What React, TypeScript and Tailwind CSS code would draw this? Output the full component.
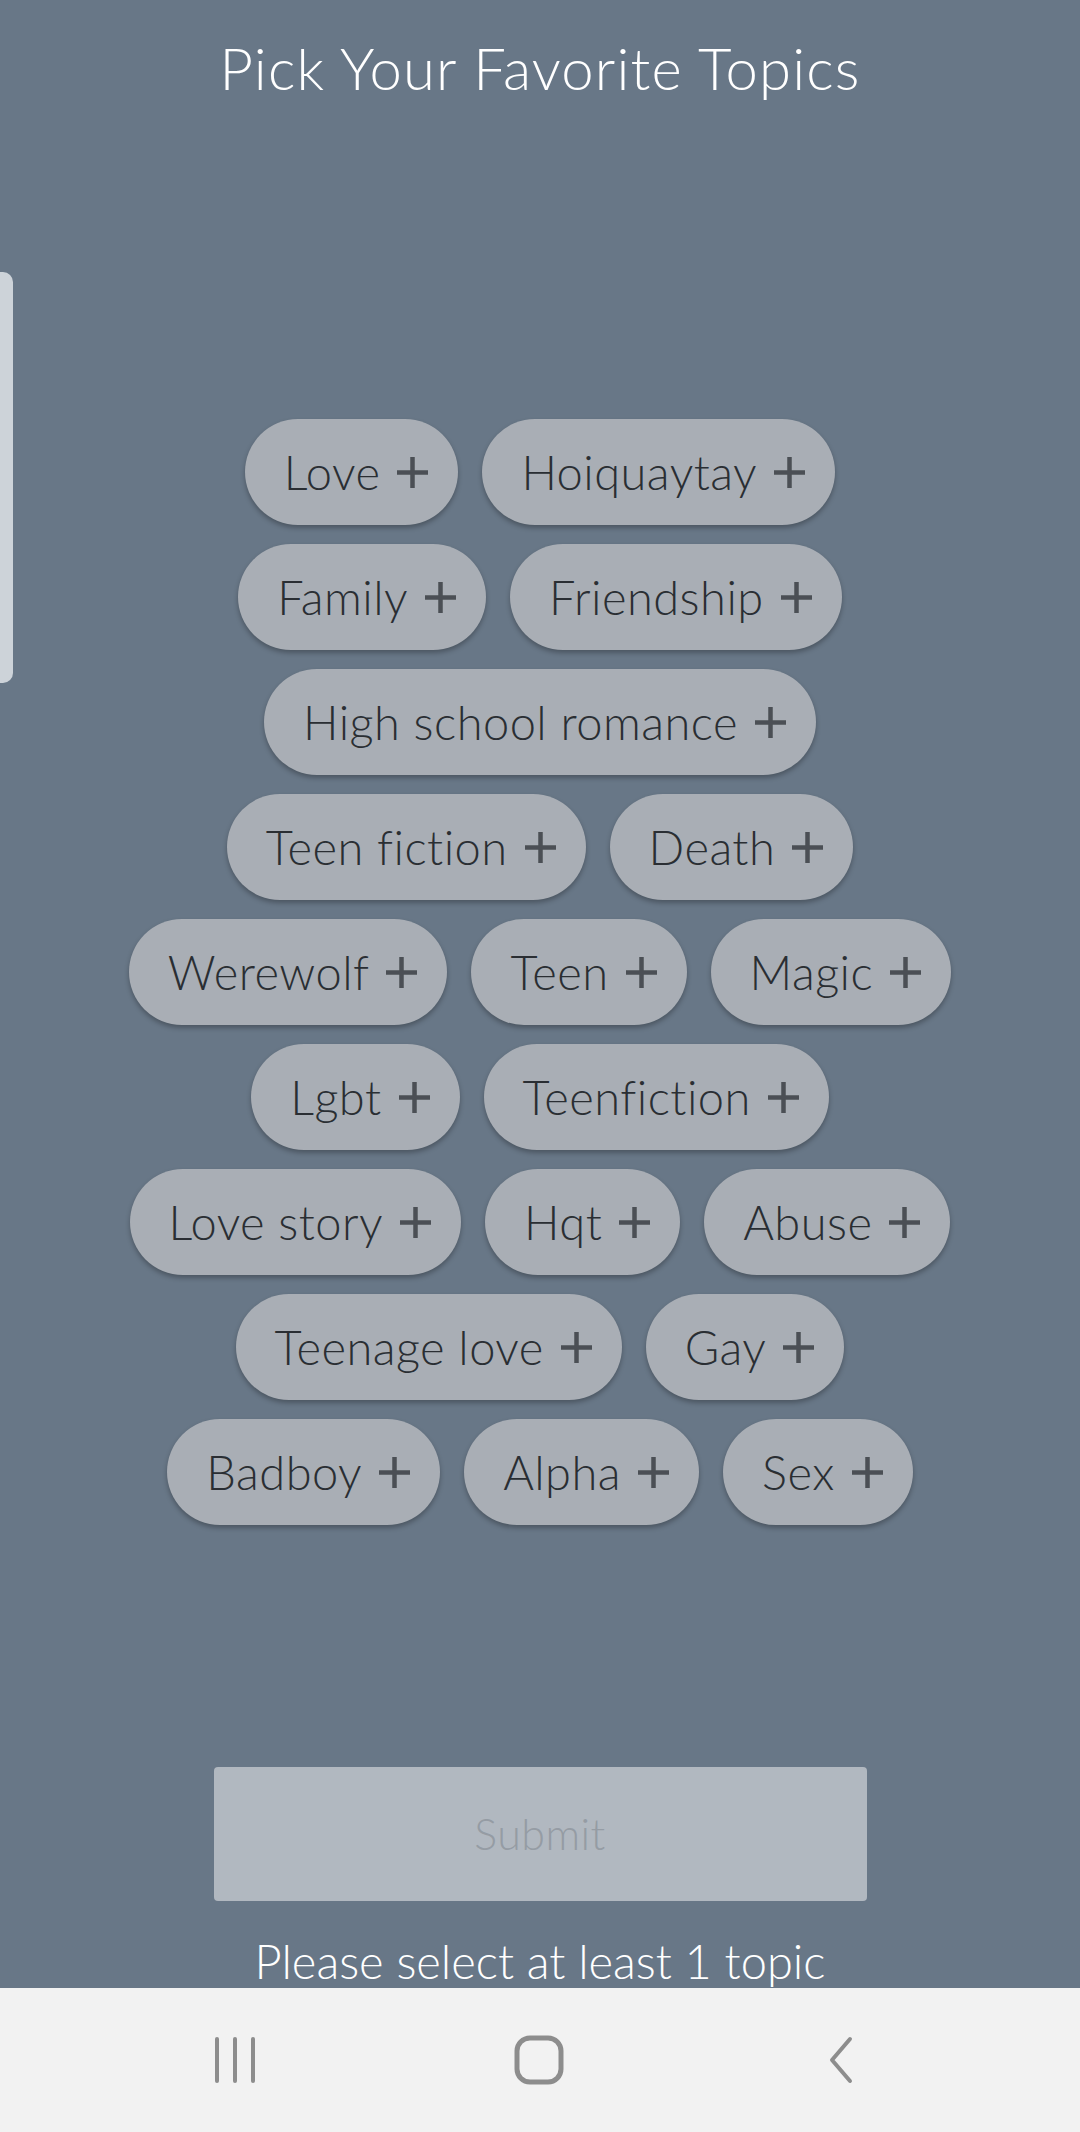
const rows: string[][] = [
  ["Love", "Hoiquaytay"],
  ["Family", "Friendship"],
  ["High school romance"],
  ["Teen fiction", "Death"],
  ["Werewolf", "Teen", "Magic"],
  ["Lgbt", "Teenfiction"],
  ["Love story", "Hqt", "Abuse"],
  ["Teenage love", "Gay"],
  ["Badboy", "Alpha", "Sex"],
];

function PlusMark() {
  return (
    <svg width="33" height="33" viewBox="0 0 33 33" fill="none" stroke="#4b4f55" strokeWidth="4.5">
      <line x1="16.5" y1="1" x2="16.5" y2="32" />
      <line x1="1" y1="16.5" x2="32" y2="16.5" />
    </svg>
  );
}

function Chip({ label }: { label: string }) {
  return (
    <button className="flex h-[106px] items-center gap-[16px] rounded-full bg-[#a9aeb5] pl-[39px] pr-[29px] text-[47px] font-light tracking-[0.01em] text-[#2a2e33] shadow-[0_3px_5px_rgba(0,0,0,0.28)]">
      <span>{label}</span>
      <PlusMark />
    </button>
  );
}

export default function App() {
  return (
    <div className="flex h-[2132px] w-[1080px] flex-col overflow-hidden bg-[#687787] font-['Lato','Open_Sans',sans-serif]">
      <div className="relative flex flex-1 flex-col items-center">
        <h1 className="pt-[36px] text-[58px] font-light leading-[64px] tracking-[0.02em] text-white">
          Pick Your Favorite Topics
        </h1>

        {/* side handle */}
        <div className="absolute left-0 top-[272px] h-[411px] w-[13px] rounded-r-[10px] bg-[#cdd3d9]" />

        <div className="mt-[319px] flex flex-col gap-[19px]">
          {rows.map((row, i) => (
            <div key={i} className="flex justify-center gap-[24px]">
              {row.map((t) => (
                <Chip key={t} label={t} />
              ))}
            </div>
          ))}
        </div>

        <button className="mt-[242px] h-[134px] w-[653px] rounded-[4px] bg-[#b1b8c0] text-[43px] font-light tracking-[0.01em] text-[#959ca4]">
          Submit
        </button>
        <p className="mt-[33px] text-[47px] font-light leading-[54px] text-white">
          Please select at least 1 topic
        </p>
      </div>

      <div className="flex h-[144px] items-center justify-between bg-[#f2f2f2] pl-[213px] pr-[224px]">
        <svg width="44" height="48" viewBox="0 0 44 48" fill="none" stroke="#8d8d8d" strokeWidth="4" strokeLinecap="round">
          <line x1="4" y1="3" x2="4" y2="45" />
          <line x1="22" y1="3" x2="22" y2="45" />
          <line x1="40" y1="3" x2="40" y2="45" />
        </svg>
        <svg width="50" height="50" viewBox="0 0 50 50" fill="none" stroke="#8d8d8d" strokeWidth="5" className="-ml-[6px]">
          <rect x="3" y="3" width="44" height="44" rx="13" />
        </svg>
        <svg width="30" height="48" viewBox="0 0 30 48" fill="none" stroke="#8d8d8d" strokeWidth="4" strokeLinecap="round" strokeLinejoin="round">
          <polyline points="24,3 6,24 24,45" />
        </svg>
      </div>
    </div>
  );
}
